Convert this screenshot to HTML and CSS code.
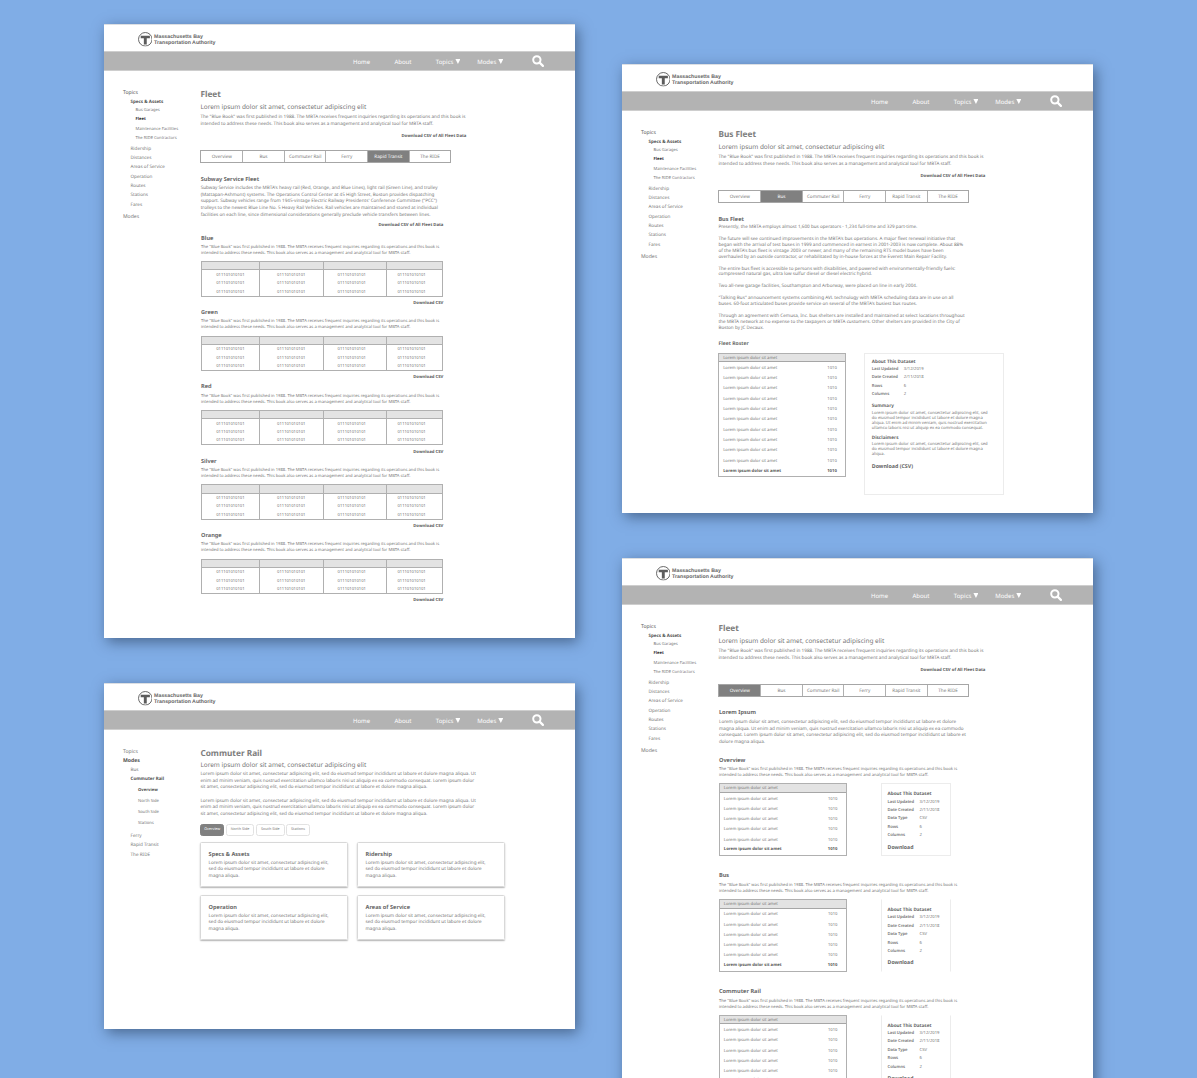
FILE: index.html
```html
<!DOCTYPE html>
<html lang="en">
<head>
<meta charset="utf-8">
<title>MBTA Blue Book wireframes</title>
<link rel="stylesheet" href="styles.css">
</head>
<body>
<svg class="defs" width="0" height="0">
  <symbol id="logo" viewBox="0 0 28 28"><circle cx="14" cy="14" r="13" fill="#fff" stroke="#666" stroke-width="1.9"/><path d="M5.2 7.2h17.6v5h-6v11.6h-5.6V12.2H5.2z" fill="#5c5c5c"/></symbol>
  <symbol id="search" viewBox="0 0 24 24"><circle cx="9.7" cy="9.7" r="7.3" fill="none" stroke="#fff" stroke-width="4"/><path d="M15.2 15.2l6.6 6.6" stroke="#fff" stroke-width="4.4" stroke-linecap="round"/></symbol>
</svg>

<article class="board rapid">
  <header class="brand"><svg><use href="#logo"/></svg><p>Massachusetts Bay<br>Transportation Authority</p></header>
  <nav class="bar"><a>Home</a><a>About</a><a>Topics<i></i></a><a>Modes<i></i></a><svg><use href="#search"/></svg></nav>
  <div class="body">
    <ul class="side">
      <li class="top dark">Topics</li><li class="on">Specs &amp; Assets</li>
      <li class="sub first">Bus Garages</li><li class="sub on">Fleet</li><li class="sub">Maintenance Facilities</li><li class="sub">The RIDE Contractors</li>
      <li class="after">Ridership</li><li>Distances</li><li>Areas of Service</li><li>Operation</li><li>Routes</li><li>Stations</li><li>Fares</li><li class="top last">Modes</li>
    </ul>
    <main>
      <h1>Fleet</h1>
      <h2>Lorem ipsum dolor sit amet, consectetur adipiscing elit</h2>
      <p class="intro">The "Blue Book" was first published in 1988. The MBTA receives frequent inquiries regarding its operations and this book is<br>intended to address these needs. This book also serves as a management and analytical tool for MBTA staff.</p>
      <p class="dl all">Download CSV of All Fleet Data</p>
      <div class="tabs"><a>Overview</a><a>Bus</a><a>Commuter Rail</a><a>Ferry</a><a class="sel">Rapid Transit</a><a>The RIDE</a></div>
      <h3 class="lead">Subway Service Fleet</h3>
      <p class="para">Subway Service includes the MBTA's heavy rail (Red, Orange, and Blue Lines), light rail (Green Line), and trolley<br>(Mattapan-Ashmont) systems. The Operations Control Center at 45 High Street, Boston provides dispatching<br>support. Subway vehicles range from 1945-vintage Electric Railway Presidents' Conference Committee ("PCC")<br>trolleys to the newest Blue Line No. 5 Heavy Rail Vehicles. Rail vehicles are maintained and stored at individual<br>facilities on each line, since dimensional considerations generally preclude vehicle transfers between lines.</p>
      <p class="dl group">Download CSV of All Fleet Data</p>
      <div class="lines">
        <section class="line"><h3>Blue</h3><p class="note">The "Blue Book" was first published in 1988. The MBTA receives frequent inquiries regarding its operations and this book is<br>intended to address these needs. This book also serves as a management and analytical tool for MBTA staff.</p>
          <div class="data"><div><b></b><span>011101010101</span><span>011101010101</span><span>011101010101</span></div><div><b></b><span>011101010101</span><span>011101010101</span><span>011101010101</span></div><div><b></b><span>011101010101</span><span>011101010101</span><span>011101010101</span></div><div><b></b><span>011101010101</span><span>011101010101</span><span>011101010101</span></div></div>
          <p class="dl">Download CSV</p></section>
        <section class="line"><h3>Green</h3><p class="note">The "Blue Book" was first published in 1988. The MBTA receives frequent inquiries regarding its operations and this book is<br>intended to address these needs. This book also serves as a management and analytical tool for MBTA staff.</p>
          <div class="data"><div><b></b><span>011101010101</span><span>011101010101</span><span>011101010101</span></div><div><b></b><span>011101010101</span><span>011101010101</span><span>011101010101</span></div><div><b></b><span>011101010101</span><span>011101010101</span><span>011101010101</span></div><div><b></b><span>011101010101</span><span>011101010101</span><span>011101010101</span></div></div>
          <p class="dl">Download CSV</p></section>
        <section class="line"><h3>Red</h3><p class="note">The "Blue Book" was first published in 1988. The MBTA receives frequent inquiries regarding its operations and this book is<br>intended to address these needs. This book also serves as a management and analytical tool for MBTA staff.</p>
          <div class="data"><div><b></b><span>011101010101</span><span>011101010101</span><span>011101010101</span></div><div><b></b><span>011101010101</span><span>011101010101</span><span>011101010101</span></div><div><b></b><span>011101010101</span><span>011101010101</span><span>011101010101</span></div><div><b></b><span>011101010101</span><span>011101010101</span><span>011101010101</span></div></div>
          <p class="dl">Download CSV</p></section>
        <section class="line"><h3>Silver</h3><p class="note">The "Blue Book" was first published in 1988. The MBTA receives frequent inquiries regarding its operations and this book is<br>intended to address these needs. This book also serves as a management and analytical tool for MBTA staff.</p>
          <div class="data"><div><b></b><span>011101010101</span><span>011101010101</span><span>011101010101</span></div><div><b></b><span>011101010101</span><span>011101010101</span><span>011101010101</span></div><div><b></b><span>011101010101</span><span>011101010101</span><span>011101010101</span></div><div><b></b><span>011101010101</span><span>011101010101</span><span>011101010101</span></div></div>
          <p class="dl">Download CSV</p></section>
        <section class="line"><h3>Orange</h3><p class="note">The "Blue Book" was first published in 1988. The MBTA receives frequent inquiries regarding its operations and this book is<br>intended to address these needs. This book also serves as a management and analytical tool for MBTA staff.</p>
          <div class="data"><div><b></b><span>011101010101</span><span>011101010101</span><span>011101010101</span></div><div><b></b><span>011101010101</span><span>011101010101</span><span>011101010101</span></div><div><b></b><span>011101010101</span><span>011101010101</span><span>011101010101</span></div><div><b></b><span>011101010101</span><span>011101010101</span><span>011101010101</span></div></div>
          <p class="dl">Download CSV</p></section>
      </div>
    </main>
  </div>
</article>

<article class="board bus">
  <header class="brand"><svg><use href="#logo"/></svg><p>Massachusetts Bay<br>Transportation Authority</p></header>
  <nav class="bar"><a>Home</a><a>About</a><a>Topics<i></i></a><a>Modes<i></i></a><svg><use href="#search"/></svg></nav>
  <div class="body">
    <ul class="side">
      <li class="top dark">Topics</li><li class="on">Specs &amp; Assets</li>
      <li class="sub first">Bus Garages</li><li class="sub on">Fleet</li><li class="sub">Maintenance Facilities</li><li class="sub">The RIDE Contractors</li>
      <li class="after">Ridership</li><li>Distances</li><li>Areas of Service</li><li>Operation</li><li>Routes</li><li>Stations</li><li>Fares</li><li class="top last">Modes</li>
    </ul>
    <main>
      <h1>Bus Fleet</h1>
      <h2>Lorem ipsum dolor sit amet, consectetur adipiscing elit</h2>
      <p class="intro">The "Blue Book" was first published in 1988. The MBTA receives frequent inquiries regarding its operations and this book is<br>intended to address these needs. This book also serves as a management and analytical tool for MBTA staff.</p>
      <p class="dl all">Download CSV of All Fleet Data</p>
      <div class="tabs"><a>Overview</a><a class="sel">Bus</a><a>Commuter Rail</a><a>Ferry</a><a>Rapid Transit</a><a>The RIDE</a></div>
      <h3 class="lead">Bus Fleet</h3>
      <div class="story">
        <p>Presently, the MBTA employs almost 1,600 bus operators - 1,234 full-time and 329 part-time.</p>
        <p>The future will see continued improvements in the MBTA's bus operations. A major fleet renewal initiative that<br>began with the arrival of test buses in 1999 and commenced in earnest in 2001-2003 is now complete. About 88%<br>of the MBTA's bus fleet is vintage 2003 or newer, and many of the remaining RTS model buses have been<br>overhauled by an outside contractor, or rehabilitated by in-house forces at the Everett Main Repair Facility.</p>
        <p>The entire bus fleet is accessible to persons with disabilities, and powered with environmentally-friendly fuels:<br>compressed natural gas, ultra low sulfur diesel or diesel electric hybrid.</p>
        <p>Two all-new garage facilities, Southampton and Arborway, were placed on line in early 2004.</p>
        <p>"Talking Bus" announcement systems combining AVL technology with MBTA scheduling data are in use on all<br>buses. 60-foot articulated buses provide service on several of the MBTA's busiest bus routes.</p>
        <p>Through an agreement with Cemusa, Inc. bus shelters are installed and maintained at select locations throughout<br>the MBTA network at no expense to the taxpayers or MBTA customers. Other shelters are provided in the City of<br>Boston by JC Decaux.</p>
      </div>
      <h4>Fleet Roster</h4>
      <div class="pair">
        <div class="roster">
          <p class="head">Lorem ipsum dolor sit amet</p>
          <p>Lorem ipsum dolor sit amet<span>1010</span></p><p>Lorem ipsum dolor sit amet<span>1010</span></p><p>Lorem ipsum dolor sit amet<span>1010</span></p><p>Lorem ipsum dolor sit amet<span>1010</span></p><p>Lorem ipsum dolor sit amet<span>1010</span></p><p>Lorem ipsum dolor sit amet<span>1010</span></p><p>Lorem ipsum dolor sit amet<span>1010</span></p><p>Lorem ipsum dolor sit amet<span>1010</span></p><p>Lorem ipsum dolor sit amet<span>1010</span></p><p>Lorem ipsum dolor sit amet<span>1010</span></p>
          <p class="sum">Lorem ipsum dolor sit amet<span>1010</span></p>
        </div>
        <div class="about wide">
          <h5>About This Dataset</h5>
          <dl><dt>Last Updated</dt><dd>3/12/2019</dd><dt>Date Created</dt><dd>2/11/2018</dd><dt>Rows</dt><dd>6</dd><dt>Columns</dt><dd>2</dd></dl>
          <h5 class="gap">Summary</h5>
          <p>Lorem ipsum dolor sit amet, consectetur adipiscing elit, sed<br>do eiusmod tempor incididunt ut labore et dolore magna<br>aliqua. Ut enim ad minim veniam, quis nostrud exercitation<br>ullamco laboris nisi ut aliquip ex ea commodo consequat.</p>
          <h5 class="gap2">Disclaimers</h5>
          <p>Lorem ipsum dolor sit amet, consectetur adipiscing elit, sed<br>do eiusmod tempor incididunt ut labore et dolore magna<br>aliqua.</p>
          <h6>Download (CSV)</h6>
        </div>
      </div>
    </main>
  </div>
</article>

<article class="board modes">
  <header class="brand"><svg><use href="#logo"/></svg><p>Massachusetts Bay<br>Transportation Authority</p></header>
  <nav class="bar"><a>Home</a><a>About</a><a>Topics<i></i></a><a>Modes<i></i></a><svg><use href="#search"/></svg></nav>
  <div class="body">
    <ul class="side">
      <li class="top">Topics</li><li class="top on">Modes</li><li>Bus</li><li class="on">Commuter Rail</li>
      <li class="deep on">Overview</li><li class="deep">North Side</li><li class="deep">South Side</li><li class="deep">Stations</li>
      <li class="ferry">Ferry</li><li>Rapid Transit</li><li>The RIDE</li>
    </ul>
    <main>
      <h1>Commuter Rail</h1>
      <h2>Lorem ipsum dolor sit amet, consectetur adipiscing elit</h2>
      <p class="para">Lorem ipsum dolor sit amet, consectetur adipiscing elit, sed do eiusmod tempor incididunt ut labore et dolore magna aliqua. Ut<br>enim ad minim veniam, quis nostrud exercitation ullamco laboris nisi ut aliquip ex ea commodo consequat. Lorem ipsum dolor<br>sit amet, consectetur adipiscing elit, sed do eiusmod tempor incididunt ut labore et dolore magna aliqua.<br><br>Lorem ipsum dolor sit amet, consectetur adipiscing elit, sed do eiusmod tempor incididunt ut labore et dolore magna aliqua. Ut<br>enim ad minim veniam, quis nostrud exercitation ullamco laboris nisi ut aliquip ex ea commodo consequat. Lorem ipsum dolor<br>sit amet, consectetur adipiscing elit, sed do eiusmod tempor incididunt ut labore et dolore magna aliqua.</p>
      <div class="pills"><a class="sel">Overview</a><a>North Side</a><a>South Side</a><a>Stations</a></div>
      <div class="cards">
        <section><h3>Specs &amp; Assets</h3><p>Lorem ipsum dolor sit amet, consectetur adipiscing elit,<br>sed do eiusmod tempor incididunt ut labore et dolore<br>magna aliqua.</p></section>
        <section><h3>Ridership</h3><p>Lorem ipsum dolor sit amet, consectetur adipiscing elit,<br>sed do eiusmod tempor incididunt ut labore et dolore<br>magna aliqua.</p></section>
        <section><h3>Operation</h3><p>Lorem ipsum dolor sit amet, consectetur adipiscing elit,<br>sed do eiusmod tempor incididunt ut labore et dolore<br>magna aliqua.</p></section>
        <section><h3>Areas of Service</h3><p>Lorem ipsum dolor sit amet, consectetur adipiscing elit,<br>sed do eiusmod tempor incididunt ut labore et dolore<br>magna aliqua.</p></section>
      </div>
    </main>
  </div>
</article>

<article class="board overview">
  <header class="brand"><svg><use href="#logo"/></svg><p>Massachusetts Bay<br>Transportation Authority</p></header>
  <nav class="bar"><a>Home</a><a>About</a><a>Topics<i></i></a><a>Modes<i></i></a><svg><use href="#search"/></svg></nav>
  <div class="body">
    <ul class="side">
      <li class="top dark">Topics</li><li class="on">Specs &amp; Assets</li>
      <li class="sub first">Bus Garages</li><li class="sub on">Fleet</li><li class="sub">Maintenance Facilities</li><li class="sub">The RIDE Contractors</li>
      <li class="after">Ridership</li><li>Distances</li><li>Areas of Service</li><li>Operation</li><li>Routes</li><li>Stations</li><li>Fares</li><li class="top last">Modes</li>
    </ul>
    <main>
      <h1>Fleet</h1>
      <h2>Lorem ipsum dolor sit amet, consectetur adipiscing elit</h2>
      <p class="intro">The "Blue Book" was first published in 1988. The MBTA receives frequent inquiries regarding its operations and this book is<br>intended to address these needs. This book also serves as a management and analytical tool for MBTA staff.</p>
      <p class="dl all">Download CSV of All Fleet Data</p>
      <div class="tabs"><a class="sel">Overview</a><a>Bus</a><a>Commuter Rail</a><a>Ferry</a><a>Rapid Transit</a><a>The RIDE</a></div>
      <h3 class="lead">Lorem Ipsum</h3>
      <p class="para">Lorem ipsum dolor sit amet, consectetur adipiscing elit, sed do eiusmod tempor incididunt ut labore et dolore<br>magna aliqua. Ut enim ad minim veniam, quis nostrud exercitation ullamco laboris nisi ut aliquip ex ea commodo<br>consequat. Lorem ipsum dolor sit amet, consectetur adipiscing elit, sed do eiusmod tempor incididunt ut labore et<br>dolore magna aliqua.</p>
      <div class="sets">
        <section class="set"><h3>Overview</h3><p class="note">The "Blue Book" was first published in 1988. The MBTA receives frequent inquiries regarding its operations and this book is<br>intended to address these needs. This book also serves as a management and analytical tool for MBTA staff.</p>
          <div class="pair"><div class="roster"><p class="head">Lorem ipsum dolor sit amet</p><p>Lorem ipsum dolor sit amet<span>1010</span></p><p>Lorem ipsum dolor sit amet<span>1010</span></p><p>Lorem ipsum dolor sit amet<span>1010</span></p><p>Lorem ipsum dolor sit amet<span>1010</span></p><p>Lorem ipsum dolor sit amet<span>1010</span></p><p class="sum">Lorem ipsum dolor sit amet<span>1010</span></p></div>
          <div class="about"><h5>About This Dataset</h5><dl><dt>Last Updated</dt><dd>3/12/2019</dd><dt>Date Created</dt><dd>2/11/2018</dd><dt>Data Type</dt><dd>CSV</dd><dt>Rows</dt><dd>6</dd><dt>Columns</dt><dd>2</dd></dl><h6>Download</h6></div></div></section>
        <section class="set"><h3>Bus</h3><p class="note">The "Blue Book" was first published in 1988. The MBTA receives frequent inquiries regarding its operations and this book is<br>intended to address these needs. This book also serves as a management and analytical tool for MBTA staff.</p>
          <div class="pair"><div class="roster"><p class="head">Lorem ipsum dolor sit amet</p><p>Lorem ipsum dolor sit amet<span>1010</span></p><p>Lorem ipsum dolor sit amet<span>1010</span></p><p>Lorem ipsum dolor sit amet<span>1010</span></p><p>Lorem ipsum dolor sit amet<span>1010</span></p><p>Lorem ipsum dolor sit amet<span>1010</span></p><p class="sum">Lorem ipsum dolor sit amet<span>1010</span></p></div>
          <div class="about open"><h5>About This Dataset</h5><dl><dt>Last Updated</dt><dd>3/12/2019</dd><dt>Date Created</dt><dd>2/11/2018</dd><dt>Data Type</dt><dd>CSV</dd><dt>Rows</dt><dd>6</dd><dt>Columns</dt><dd>2</dd></dl><h6>Download</h6></div></div></section>
        <section class="set"><h3>Commuter Rail</h3><p class="note">The "Blue Book" was first published in 1988. The MBTA receives frequent inquiries regarding its operations and this book is<br>intended to address these needs. This book also serves as a management and analytical tool for MBTA staff.</p>
          <div class="pair"><div class="roster"><p class="head">Lorem ipsum dolor sit amet</p><p>Lorem ipsum dolor sit amet<span>1010</span></p><p>Lorem ipsum dolor sit amet<span>1010</span></p><p>Lorem ipsum dolor sit amet<span>1010</span></p><p>Lorem ipsum dolor sit amet<span>1010</span></p><p>Lorem ipsum dolor sit amet<span>1010</span></p><p class="sum">Lorem ipsum dolor sit amet<span>1010</span></p></div>
          <div class="about open"><h5>About This Dataset</h5><dl><dt>Last Updated</dt><dd>3/12/2019</dd><dt>Date Created</dt><dd>2/11/2018</dd><dt>Data Type</dt><dd>CSV</dd><dt>Rows</dt><dd>6</dd><dt>Columns</dt><dd>2</dd></dl><h6>Download</h6></div></div></section>
      </div>
    </main>
  </div>
</article>
</body>
</html>
```
FILE: styles.css
```css
* { box-sizing: border-box; margin: 0; padding: 0; }
html, body { height: 1078px; overflow: hidden; }
body {
  position: relative;
  background: #80ade6;
  font-family: "Noto Sans", "Open Sans", sans-serif;
  font-size: 4.62px;
  color: #777;
  white-space: nowrap;
  text-rendering: geometricPrecision;
}
.defs { position: absolute; }

/* artboards placed on the canvas */
.board {
  position: absolute;
  width: 471px;
  background: #fff;
  border-top: 1px solid #dcdfe3;
  box-shadow: 3px 4px 13px rgba(20, 35, 60, .5);
}
.rapid { left: 104px; top: 24px; height: 614px; }
.bus { left: 622px; top: 64px; height: 449px; }
.modes { left: 104px; top: 683px; height: 346px; }
.overview { left: 622px; top: 558px; height: 560px; }

.brand { display: flex; height: 26px; padding: 7px 0 0 33.5px; }
.brand svg { width: 14.6px; height: 14.6px; }
.brand p {
  margin: 1.7px 0 0 2px;
  font: bold 5.25px/6.4px "Liberation Sans", Arial, sans-serif;
  color: #666;
}

.bar {
  display: grid;
  grid-template-columns: repeat(4, 41.4px) 30px;
  height: 20px;
  padding-left: 249px;
  background: #b3b3b3;
  border: solid #cecece;
  border-width: 1px 0;
  font-size: 6.04px;
  line-height: 20.4px;
  color: #fff;
}
.bar a { height: 18px; }
.bar i {
  display: inline-block;
  width: 5px;
  height: 5px;
  margin-left: 2px;
  background: #fff;
  clip-path: polygon(0 0, 100% 0, 50% 100%);
}
.bar svg { width: 12px; height: 12px; margin: 3px 0 0 13px; }

.body { display: flex; }
.side { width: 96.4px; padding: 17.5px 0 0 26.5px; list-style: none; }
.side li { height: 9.34px; line-height: 9.34px; }
.side .top { margin-left: -7.5px; font-size: 5.1px; }
.side .dark { color: #555; }
.side .on { font-size: 4.5px; font-weight: 700; color: #505050; }
.side .top.on { font-size: 5.1px; }
.side .sub { margin-left: 5px; font-size: 4.12px; }
.side .sub.on { font-size: 4.15px; color: #303030; }
.side .first { margin-top: -1.2px; }
.side .after { margin-top: 1.3px; }
.side .last { margin-top: 3.3px; }
.side .deep { height: 11px; line-height: 11px; margin-left: 7.5px; font-size: 4.2px; }
.side .ferry { margin-top: 3.2px; }

main { padding-top: 18.3px; }
h1 { font-size: 8.27px; line-height: 12px; color: #7d7d7d; }
h2 { margin-top: .7px; font-size: 6.44px; line-height: 10px; font-weight: 400; }
h3 { font-size: 5.62px; line-height: 8px; color: #6a6a6a; }
h4 { margin: 8.8px 0 4.2px; font-size: 5.05px; line-height: 8px; color: #6a6a6a; }
.intro { margin-top: 2.5px; line-height: 6.6px; }
.dl { font-size: 4.26px; line-height: 6px; font-weight: 700; text-align: right; color: #5c5c5c; }
.dl.all { width: 266px; margin: 5.4px 0 10.9px; }
.bus .dl.all, .overview .dl.all { width: 267px; }

.tabs {
  display: grid;
  grid-template-columns: 40.8px repeat(5, 1fr);
  width: 251px;
  height: 12.6px;
  border: 1px solid #a6a6a6;
  line-height: 12.2px;
  text-align: center;
}
.tabs a { height: 10.6px; }
.tabs a + a { border-left: 1px solid #b0b0b0; }
.tabs .sel { background: #808080; color: #fff; }
.lead { margin-top: 12px; }
.para { line-height: 6.65px; }
.rapid .para { margin: 2.6px 0 3.1px .3px; }
.rapid .lead { margin-left: .3px; }
.dl.group { width: 243px; }

.lines { width: 243px; padding: 6.2px 0 0 .6px; }
.line { height: 74.35px; }
.note { margin: 3.2px 0 4.4px; font-size: 4.15px; line-height: 6px; }
.data {
  display: grid;
  grid-template-columns: 56.8px 63.9px 63.1px 1fr;
  height: 35.5px;
  border: 1px solid #b0b0b0;
  font-size: 4.13px;
  line-height: 8.35px;
  text-align: center;
}
.data div { height: 33.5px; }
.data div + div { border-left: 1px solid #b0b0b0; }
.data b, .data span { display: block; }
.data b { height: 8.2px; margin-bottom: 1.5px; background: #e3e3e3; border-bottom: 1px solid #b0b0b0; }
.data div:nth-child(n+3) span { padding-right: 6px; }
.line .dl { margin-top: 3.2px; }

.story { margin-top: 2.7px; font-size: 4.62px; line-height: 5.91px; }
.story p + p { margin-top: 5.91px; }

.pair { display: flex; align-items: flex-start; }
.roster { width: 128px; height: 124px; border: 1px solid #b0b0b0; font-size: 4.16px; line-height: 10.32px; }
.roster p { display: flex; justify-content: space-between; height: 10.32px; padding: 0 8.6px 0 3.8px; }
.roster .head { height: 8.6px; line-height: 9px; margin-bottom: 1.7px; background: #e3e3e3; border-bottom: 1px solid #a6a6a6; }
.roster .sum { height: 9.3px; line-height: 8.9px; font-size: 4.22px; font-weight: 700; color: #585858; }
.about { border: 1px solid #ececec; }
.about h5 { font-size: 4.64px; line-height: 8.3px; color: #666; }
.about dl { display: grid; grid-template-columns: 32px 1fr; font-size: 4.2px; line-height: 8.36px; }
.about dt { font-weight: 600; letter-spacing: -.06px; }
.about h6 { font-size: 5.3px; line-height: 8px; color: #666; }
.about.wide { width: 139.5px; height: 142px; margin-left: 17.8px; padding: 4.1px 0 0 6.6px; font-size: 4.15px; line-height: 4.9px; }
.wide .gap { margin-top: 3px; }
.wide .gap2 { margin-top: 2.1px; }
.wide p { margin-top: 1.4px; }
.wide h6 { margin-top: 4.2px; }

.overview .lead { margin-top: 11.6px; }
.overview .lead, .overview .para { margin-left: .6px; }
.overview .para { margin-top: 3px; }
.sets { padding: 10px 0 0 .6px; }
.set { height: 115.7px; }
.set .note { margin: 3.4px 0 4.1px; }
.set .roster { height: 73px; }
.set .about { width: 70px; height: 73px; margin-left: 33.6px; padding: 6.2px 0 0 6px; }
.set .about.open { border-top-color: transparent; border-bottom-color: transparent; }
.set h6 { margin-top: 2.2px; font-size: 5.2px; }
.set .roster .sum { line-height: 7.6px; }

.modes h2 { margin-top: -.5px; }
.modes .para { margin-top: 1.3px; }
.pills { display: flex; gap: 1.6px; margin-top: 6.7px; font-size: 3.7px; line-height: 10.6px; text-align: center; }
.pills a { width: 28.7px; height: 11.3px; border: 1px solid #e2e2e2; border-radius: 2.5px; }
.pills a:first-child, .pills a:last-child { width: 23.7px; }
.pills .sel { background: #808080; border-color: #808080; color: #fff; }
.cards { display: grid; grid-template-columns: 147.7px 147.7px; gap: 8.8px 9.3px; margin-top: 6.7px; }
.cards section {
  height: 44.3px;
  padding: 6.4px 0 0 7.2px;
  border: 1px solid #d8d8d8;
  border-radius: 1.5px;
  box-shadow: 0 1px 1.5px rgba(0, 0, 0, .3);
}
.cards p { margin-top: 2px; line-height: 6.55px; }
```
